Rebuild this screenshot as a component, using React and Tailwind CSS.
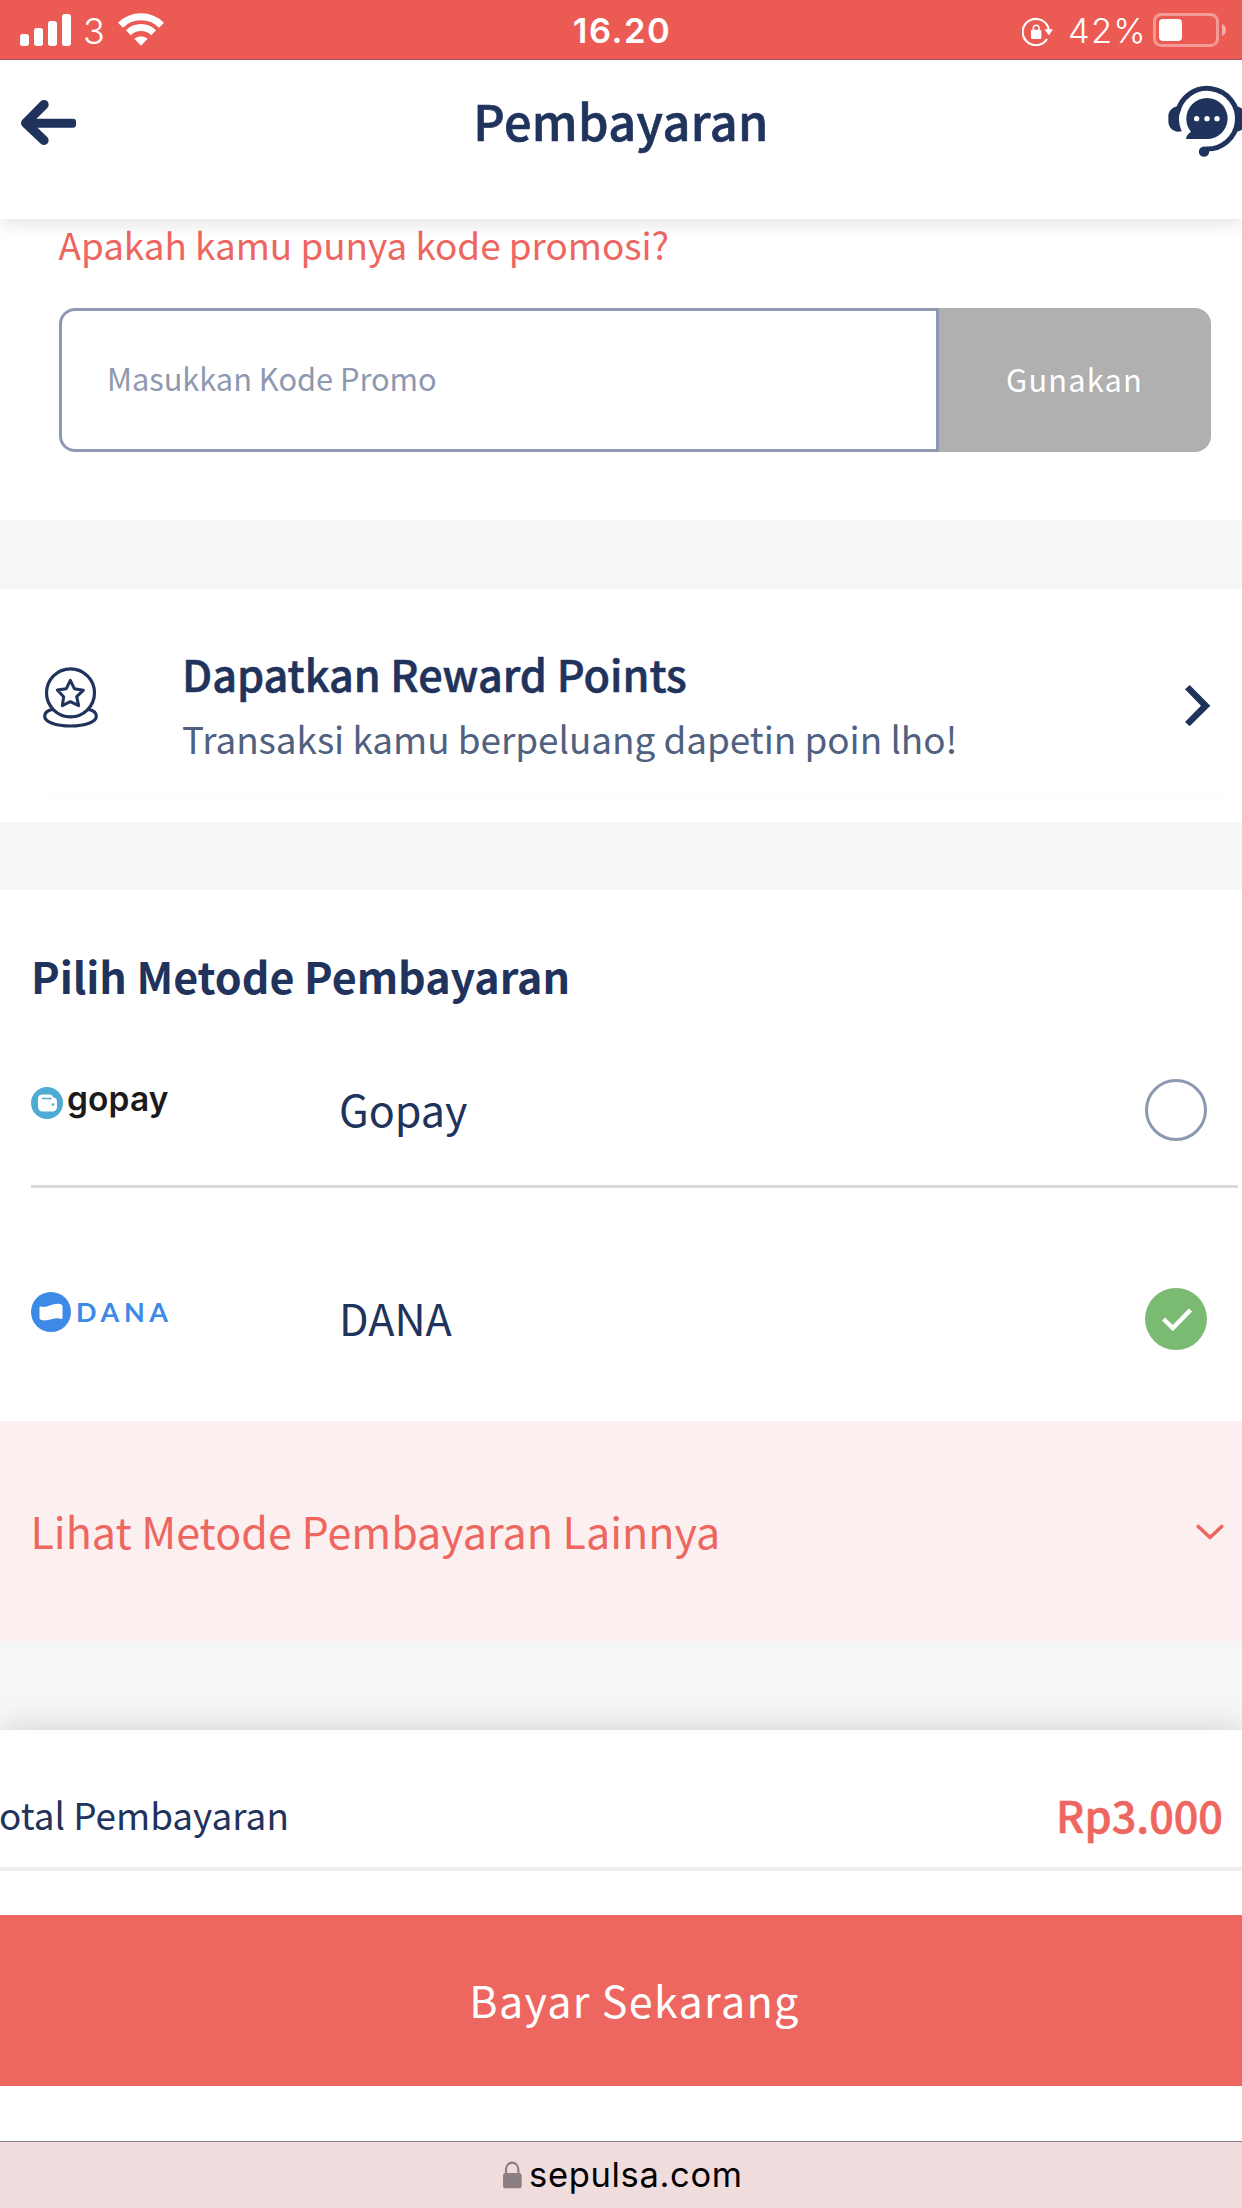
import React from "react";

const NAVY = "#1f335c";

function SignalIcon() {
  return (
    <svg viewBox="60 42 153 96" className="h-8 w-[51px]" fill="#fff">
      <rect x="60" y="102" width="27" height="36" rx="8" />
      <rect x="102" y="84" width="27" height="54" rx="8" />
      <rect x="144" y="63" width="27" height="75" rx="8" />
      <rect x="186" y="42" width="27" height="96" rx="8" />
    </svg>
  );
}

function WifiIcon() {
  return (
    <svg viewBox="354 39 138 99" className="h-[33px] w-[46px]" fill="none" stroke="#fff" strokeWidth="21">
      <path d="M361.5 75.5a87 87 0 0 1 123 0" />
      <path d="M385 98.5a54 54 0 0 1 76 0" />
      <path d="M423 137l-20-20.500a29 29 0 0 1 40 0z" fill="#fff" stroke="none" />
    </svg>
  );
}

function RotationLockIcon() {
  return (
    <svg viewBox="126 51 93 87" className="h-[29px] w-[31px]" fill="none" stroke="#fff">
      <path d="M206.500 90A39.500 39.500 0 1 0 201 117" strokeWidth="6.500" />
      <path d="M193 88h26l-12 18z" fill="#fff" stroke="none" />
      <path d="M160 91v-7a8.500 8.500 0 0 1 17 0v7" strokeWidth="4.500" />
      <rect x="153" y="89" width="31" height="28" rx="4" fill="#fff" stroke="none" />
    </svg>
  );
}

function BatteryIcon() {
  return (
    <svg viewBox="519 39 219 102" className="h-[34px] w-[73px]" fill="none">
      <rect x="523.500" y="43.500" width="189" height="93" rx="20" stroke="#fff" strokeOpacity=".4" strokeWidth="9" />
      <path d="M726 72c16 5 16 31 0 36z" fill="#fff" fillOpacity=".5" />
      <rect x="537" y="57" width="69" height="66" rx="12" fill="#fff" />
    </svg>
  );
}

function BackIcon() {
  return (
    <svg viewBox="60 298 170 140" className="h-[46.7px] w-[56.7px]" fill="none" stroke={NAVY} strokeLinejoin="round" strokeLinecap="round">
      <path d="M132 315L77 370l55 52" strokeWidth="28" />
      <path d="M82 361l26-5v27l-26-4z" fill={NAVY} stroke="none" />
      <rect x="90" y="357" width="138" height="27" rx="9" fill={NAVY} stroke="none" />
    </svg>
  );
}

function SupportIcon() {
  return (
    <svg viewBox="564 252 234 220" className="h-[73.3px] w-[78px] shrink-0" fill={NAVY}>
      <path d="M592 340A91 91 0 1 1 676 447" fill="none" stroke={NAVY} strokeWidth="15" />
      <path d="M594 319C574 322 565 335 565 350v14c0 19 14 31 29 31 4 0 8 0 11-2-10-24-11-48-1-66z" />
      <path d="M768 319c20 3 29 16 29 31v14c0 19-14 31-29 31l-3-2c6-24 6-48-2-66z" />
      <circle cx="672" cy="455" r="15.500" />
      <path d="M681 294a62 61.500 0 0 1 0 123h-63c0-9 7-17 15-22-10-11-14-24-14-39a62 62 0 0 1 62-62z" />
      <g fill="#fff">
        <circle cx="650" cy="356" r="8" />
        <circle cx="681" cy="356" r="8" />
        <circle cx="711" cy="356" r="8" />
      </g>
    </svg>
  );
}

function RewardIcon() {
  return (
    <svg viewBox="129 81 165 183" className="h-[61px] w-[55px]" fill="none" stroke={NAVY} strokeWidth="9.500" strokeLinecap="round" strokeLinejoin="round">
      <circle cx="211.500" cy="158.500" r="72" />
      <path d="M158 208c-16 3-24 11-24 21 0 17 33 29 77.500 29s77.500-12 77.500-29c0-10-8-18-24-21" />
      <path d="M211 121l12 25 27 5-20 19 6 27-25-12-24 12 4-27-19-20 27-4z" strokeWidth="9" />
    </svg>
  );
}

function GopayLogo() {
  return (
    <div className="flex h-8 items-center">
      <svg viewBox="0 0 32 32" className="h-8 w-8 shrink-0">
        <circle cx="16" cy="16" r="16" fill="#4dabd4" />
        <path d="M11 7.500h8a4 4 0 0 1 3.500 3 4 4 0 0 1 3.500 4V20a4.500 4.500 0 0 1-4.500 4.500h-10A4.500 4.500 0 0 1 7 20v-8a4.500 4.500 0 0 1 4-4.500z" fill="#fff" />
        <path d="M11.500 11.500H20" stroke="#4dabd4" strokeWidth="1.600" strokeLinecap="round" />
        <circle cx="22" cy="17.500" r="1.300" fill="#4dabd4" />
      </svg>
      <span className="ml-1 pb-[7px] font-[Inter] text-[33.5px] leading-8 font-semibold tracking-[0.1px] text-[#1c1a1b]">gopay</span>
    </div>
  );
}

function DanaLogo() {
  return (
    <div className="flex h-10 items-center">
      <svg viewBox="0 0 40 40" className="h-10 w-10 shrink-0">
        <circle cx="20" cy="20" r="20" fill="#3d8ae6" />
        <path d="M8.500 15.500q0-1.500 1.500-1C16 16.500 22 10.500 29 12q2.500.6 2.500 2v12q0 1.500-1.500.9C24 24.500 17 30 10.500 28q-2-.5-2-2z" fill="#fff" />
      </svg>
      <span className="ml-[5px] font-[Lato] text-[27px] leading-10 font-bold tracking-[4.6px] text-[#3d8ae6]">DANA</span>
    </div>
  );
}

function Radio({ checked }) {
  return checked ? (
    <span className="flex size-[62px] items-center justify-center rounded-full bg-[#7bba72]">
      <svg viewBox="0 0 62 62" className="size-[62px]" fill="none" stroke="#fff" strokeWidth="4.500">
        <path d="M18.500 31L27.800 40 45.500 22" />
      </svg>
    </span>
  ) : (
    <span className="size-[62px] rounded-full border-[3px] border-[#8d99b0]" />
  );
}

function Method({ logo, name, checked, className }) {
  return (
    <div className={"flex h-[152px] items-center pt-px pr-[31px] " + className}>
      <div className="w-[308px] pb-[14px]">{logo}</div>
      <span className="grow pb-[3px] text-[43.1px] leading-[64px]">{name}</span>
      <Radio checked={checked} />
    </div>
  );
}

export default function App() {
  return (
    <div className="flex h-[2208px] w-[1242px] flex-col overflow-hidden bg-white font-['Noto_Sans_CJK_JP',sans-serif] text-[#1f335c]">
      <div className="relative z-20 grid h-[60px] shrink-0 grid-cols-3 border-b border-[#a9505a] bg-[#ec5b53] font-[Inter] text-white">
        <div className="flex items-center pl-5">
          <SignalIcon />
          <span className="ml-[12px] pt-[3px] text-[36px] leading-[56px] font-light">3</span>
          <span className="ml-[13px]"><WifiIcon /></span>
        </div>
        <span className="pt-[3px] pl-[2px] text-center text-[34.5px] leading-[56px] font-semibold tracking-[1.5px]">16.20</span>
        <div className="flex items-center justify-end pr-4">
          <span className="mt-1"><RotationLockIcon /></span>
          <span className="ml-[15px] pt-[3px] text-[34.5px] leading-[56px] font-light tracking-[1.3px]">42%</span>
          <span className="ml-[6px]"><BatteryIcon /></span>
        </div>
      </div>

      <header className="relative z-10 flex h-[159px] shrink-0 items-start bg-white shadow-[0_0_22px_rgba(0,0,0,0.17)]">
        <div className="w-[414px] pt-[39px] pl-5"><BackIcon /></div>
        <h1 className="w-[414px] pt-[30px] text-center text-[48.6px] leading-[60px] font-medium tracking-[0.4px] [-webkit-text-stroke:0.7px_#1f335c]">Pembayaran</h1>
        <div className="flex w-[414px] overflow-hidden pt-6 pl-[340px]"><SupportIcon /></div>
      </header>

      <section className="h-[301px] shrink-0 pl-[58.5px] pt-px">
        <p className="text-[36.9px] leading-[48px] tracking-[-0.04px] text-[#ee6660]">Apakah kamu punya kode promosi?</p>
        <div className="mt-[40px] flex h-[144px] w-[1152px]">
          <div className="flex w-[880px] items-center rounded-l-2xl border-[3px] border-[#8d99b0] pb-[3px] pl-[45.5px] text-[30.8px] tracking-[-0.04px] text-[#8d99b0]">Masukkan Kode Promo</div>
          <button className="grow rounded-r-2xl bg-[#b0b0b0] pb-[2px] text-[30.8px] tracking-[1.15px] text-white">Gunakan</button>
        </div>
      </section>

      <div className="h-[69px] shrink-0 bg-[#f5f6f8]" />

      <section className="h-[233px] shrink-0 pr-4 pl-[42px]">
        <div className="flex h-[206px] border-b border-[#fafafb] pl-px">
          <div className="w-[139px] pt-[78px]"><RewardIcon /></div>
          <div className="grow pt-[52px]">
            <h2 className="text-[43.2px] leading-[64px] font-medium tracking-[-0.03px] [-webkit-text-stroke:0.6px_#1f335c]">Dapatkan Reward Points</h2>
            <p className="mt-px text-[36.9px] leading-[64px] tracking-[-0.04px] text-[#50617f]">Transaksi kamu berpeluang dapetin poin lho!</p>
          </div>
          <svg viewBox="855 1184 76 124" className="mt-[95.5px] mr-[15.500px] h-[41.300px] w-[25.300px]" fill={NAVY}>
            <path d="M869 1184l62 62-62 62-14-13 48-49-48-49z" />
          </svg>
        </div>
      </section>

      <div className="h-[68px] shrink-0 bg-[#f5f6f8]" />

      <section className="h-[531px] shrink-0 pt-[53px] pr-1 pl-[31px]">
        <h2 className="text-[43.04px] leading-[64px] font-bold tracking-[-0.04px]">Pilih Metode Pembayaran</h2>
        <Method logo={<GopayLogo />} name="Gopay" className="mt-[26px] border-b-[3px] border-[#dadada] box-content h-[151px]!" />
        <Method logo={<DanaLogo />} name="DANA" checked className="mt-[54px]" />
      </section>

      <div className="flex h-[220px] shrink-0 items-center justify-between bg-[#fcefef] pr-[18px] pb-[2px] pl-[30.5px] text-[#ee6660]">
        <span className="text-[43.04px] leading-[64px]">Lihat Metode Pembayaran Lainnya</span>
        <svg viewBox="0 0 28 17" className="mt-[4px] h-[17px] w-7" fill="none" stroke="#ee6660" strokeWidth="3.600" strokeLinecap="round" strokeLinejoin="round">
          <path d="M2.300 2.500L14 13.500 25.700 2.500" />
        </svg>
      </div>

      <div className="h-[89px] shrink-0 bg-[#f5f6f8]" />

      <footer className="relative h-[411px] shrink-0 bg-white shadow-[0_0_30px_rgba(0,0,0,0.16)]">
        <div className="flex h-[141px] items-center justify-between border-b-[4px] border-[#efefef] pt-[31px] pr-[19px]">
          <span className="-ml-[1px] text-[36.9px] leading-[64px]">otal Pembayaran</span>
          <span className="text-[43.2px] leading-[64px] font-medium text-[#ee6660] [-webkit-text-stroke:0.6px_#ee6660]">Rp3.000</span>
        </div>
        <button className="mt-11 block h-[171px] w-full bg-[#ed6660] pb-[3px] pl-[27px] text-[43.1px] tracking-[1.3px] text-white">Bayar Sekarang</button>
      </footer>

      <div className="relative flex h-[67px] shrink-0 items-center justify-center gap-[7px] border-t border-[#8a8085] bg-[#f1dcdd] pl-[4px] font-[Inter] text-[34.5px] tracking-[0.66px] text-black">
        <svg viewBox="195 779 56 82" className="h-[27.300px] w-[18.700px]">
          <path d="M204 820v-16a18.500 20 0 0 1 37 0v16" fill="none" stroke="#8b7f84" strokeWidth="6.500" />
          <rect x="195" y="815" width="56" height="46" rx="8" fill="#8b7f84" />
        </svg>
        <span>sepulsa.com</span>
      </div>
    </div>
  );
}
